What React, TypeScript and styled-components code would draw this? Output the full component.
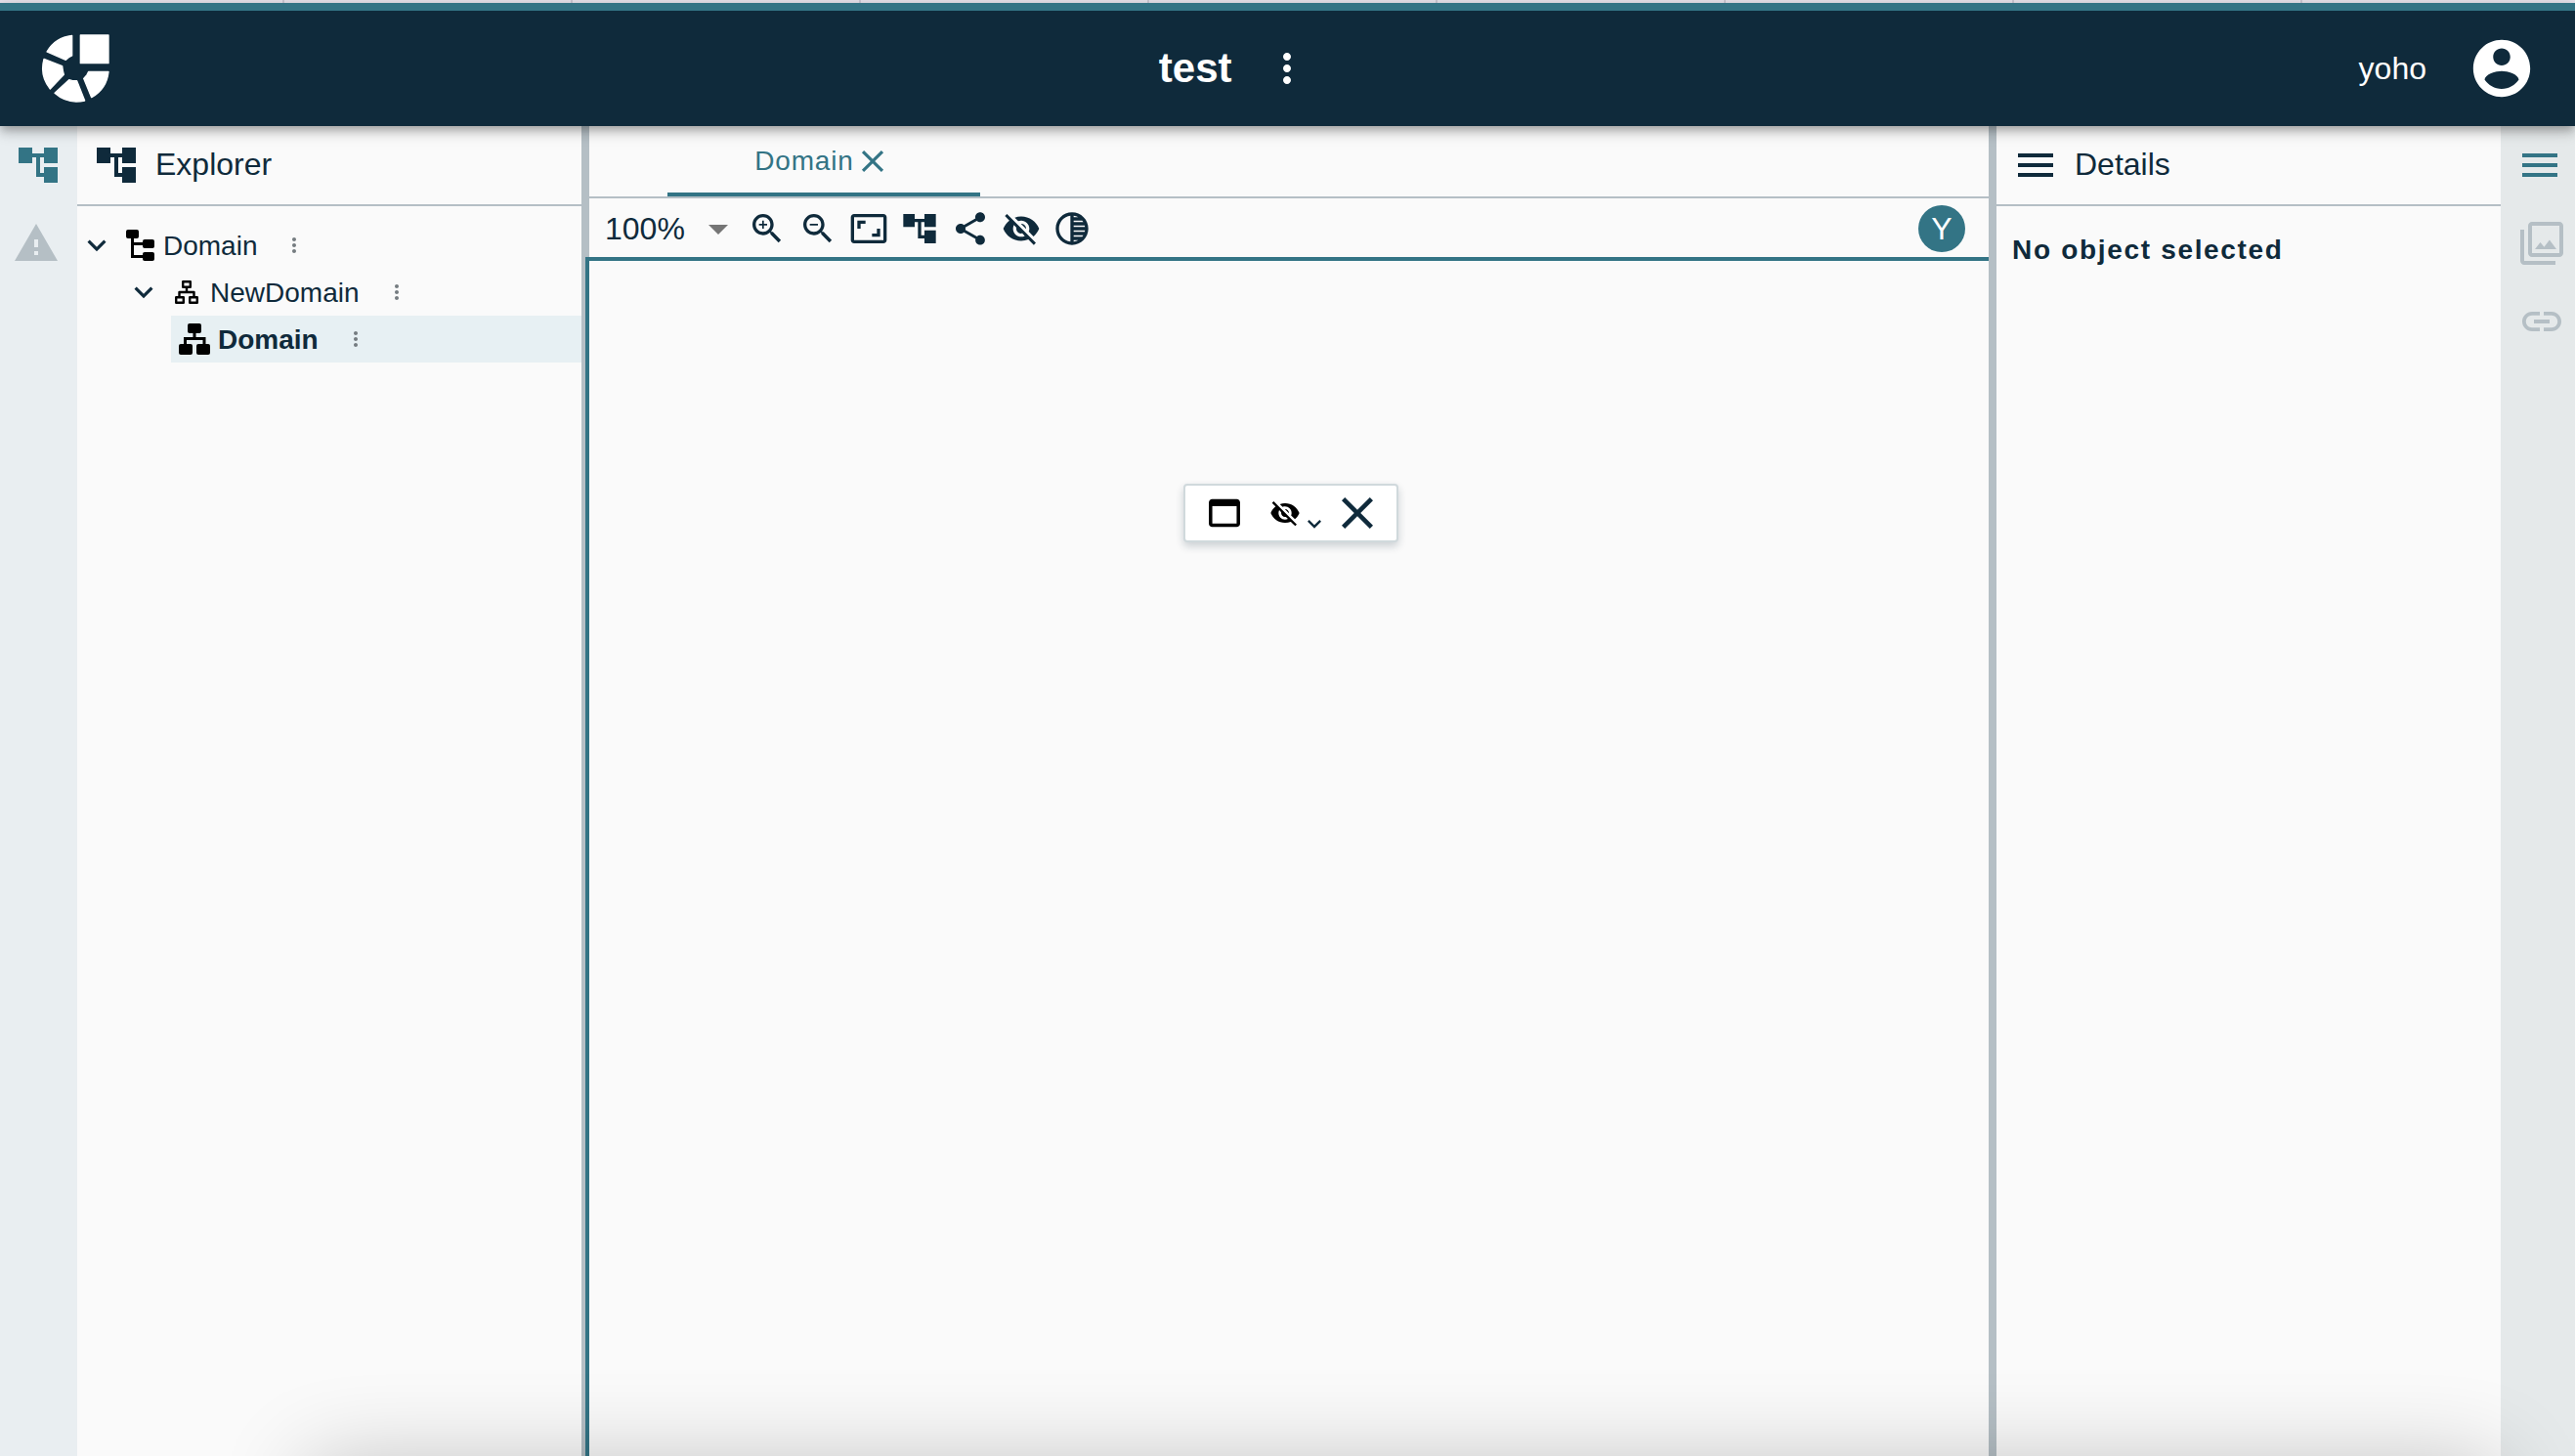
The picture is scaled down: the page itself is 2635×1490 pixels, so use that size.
import React from "react";
import styled, { createGlobalStyle } from "styled-components";

const color = {
  navy: "#0f2a3b",
  teal: "#337485",
  paper: "#fafafa",
  line: "#b5bfc5",
  muted: "#b5bfc5",
};

const GlobalStyle = createGlobalStyle`
  *, *::before, *::after { box-sizing: border-box; }
  body {
    margin: 0;
    background: ${color.paper};
    color: ${color.navy};
    font-family: "Liberation Sans", Arial, Helvetica, sans-serif;
    font-size: 28px;
    line-height: 32px;
  }
  button, select { font: inherit; color: inherit; }
  h1, h2, p, ul { margin: 0; padding: 0; }
`;

const Page = styled.div`
  position: relative;
  display: flex;
  flex-direction: column;
  height: 100vh;
  overflow: hidden;
`;

const WindowEdge = styled.div`
  flex: none;
  height: 3px;
  background: repeating-linear-gradient(90deg, #e6e2eb 0 293px, #cbc7d2 293px 295px) -4px 0;
`;

const Header = styled.header`
  position: relative;
  z-index: 2;
  flex: none;
  display: grid;
  grid-template-columns: 1fr 48px 1fr;
  align-items: center;
  column-gap: 32px;
  height: 126px;
  padding: 0 40px 0 38px;
  border-top: 8px solid ${color.teal};
  background: ${color.navy};
  color: #fff;
  box-shadow: 0 4px 8px -2px rgba(0, 0, 0, 0.2), 0 8px 10px rgba(0, 0, 0, 0.14),
    0 2px 20px rgba(0, 0, 0, 0.12);
`;

const Brand = styled.div`
  display: flex;
  align-items: center;
  justify-content: space-between;
  padding-left: 4px;
`;

const ProjectName = styled.h1`
  font-size: 42px;
  line-height: 48px;
  font-weight: 700;
`;

const Account = styled.div`
  display: flex;
  align-items: center;
  justify-content: flex-end;
  gap: 42px;
  font-size: 32px;
`;

const IconButton = styled.button<{ $box: number; $color?: string }>`
  flex: none;
  display: flex;
  align-items: center;
  justify-content: center;
  width: ${(p) => p.$box}px;
  height: ${(p) => p.$box}px;
  padding: 0;
  border: 0;
  background: none;
  color: ${(p) => p.$color ?? "inherit"};
  cursor: pointer;
`;

const Svg = styled.svg`
  flex: none;
  display: block;
  fill: currentColor;
`;

const Workbench = styled.div`
  flex: 1;
  min-height: 0;
  display: grid;
  grid-template-columns: 79px 516px 8px minmax(0, 1fr) 8px 516px 76px;
`;

const Rail = styled.nav<{ $side: "left" | "right" }>`
  display: flex;
  flex-direction: column;
  align-items: center;
  gap: 32px;
  padding: ${(p) => (p.$side === "right" ? "16px 0 0 4px" : "16px 1px 0 0")};
  background: ${(p) => (p.$side === "left" ? "#e9eef1" : "#e5e9ea")};
`;

const RailButton = styled.button<{ $side: "left" | "right" }>`
  display: flex;
  justify-content: center;
  width: 100%;
  padding: 0;
  border: 0 solid transparent;
  background: none;
  color: ${color.teal};
  cursor: pointer;

  &[aria-pressed="false"] {
    color: ${color.muted};
    border-${(p) => (p.$side === "left" ? "right" : "left")}-width: 4px;
  }
`;

const Panel = styled.section`
  min-width: 0;
  display: flex;
  flex-direction: column;
`;

const PanelHeader = styled.div`
  flex: none;
  display: flex;
  align-items: center;
  gap: 16px;
  height: 82px;
  padding: 0 16px;
  border-bottom: 2px solid ${color.line};
`;

const PanelTitle = styled.h2`
  padding-bottom: 2px;
  font-size: 32px;
  line-height: 40px;
  font-weight: 400;
`;

const Splitter = styled.div`
  background: ${color.line};
`;

const Tree = styled.ul`
  padding-top: 16px;
  list-style: none;
`;

const Branch = styled.ul`
  list-style: none;
`;

const Row = styled.div<{ $depth: number }>`
  display: flex;
  align-items: center;
  height: 48px;
  padding-left: ${(p) => p.$depth * 48}px;
`;

const RowContent = styled.div<{ $selected?: boolean }>`
  flex: 1;
  display: flex;
  align-items: center;
  gap: 8px;
  height: 100%;
  padding-left: 8px;
  background: ${(p) => (p.$selected ? "#e7f0f3" : "transparent")};
  font-weight: ${(p) => (p.$selected ? 700 : 400)};
`;

const ItemIcon = styled.span`
  display: flex;
  justify-content: center;
  width: 32px;
  color: #000;
`;

const ItemLabel = styled.span`
  padding: 2px 18px 0 0;
`;

const Message = styled.p`
  padding: 29px 16px;
  font-weight: 700;
  letter-spacing: 0.06em;
`;

const TabBar = styled.div`
  flex: none;
  height: 74px;
  padding-left: 80px;
  border-bottom: 2px solid ${color.line};
`;

const Tab = styled.div`
  display: flex;
  align-items: center;
  justify-content: center;
  width: 320px;
  height: 72px;
  padding: 4px 2px 0 0;
  border-bottom: 4px solid ${color.teal};
  color: ${color.teal};
`;

const TabLabel = styled.button`
  padding: 0;
  border: 0;
  background: none;
  letter-spacing: 0.03em;
  cursor: pointer;
`;

const Toolbar = styled.div`
  flex: none;
  display: flex;
  align-items: center;
  gap: 12px;
  height: 60px;
  padding: 2px 24px 0 16px;
`;

const ZoomField = styled.label`
  position: relative;
  display: flex;
  align-items: center;
  width: 134px;
  font-size: 32px;
`;

const ZoomSelect = styled.select`
  width: 100%;
  height: 40px;
  padding: 0;
  border: 0;
  background: none;
  appearance: none;
`;

const SelectArrow = styled.span`
  position: absolute;
  right: -6px;
  color: #757575;
  pointer-events: none;
`;

const UserBadge = styled.span`
  display: flex;
  align-items: center;
  justify-content: center;
  width: 48px;
  height: 48px;
  margin-left: auto;
  border-radius: 50%;
  background: ${color.teal};
  color: #fff;
  font-size: 32px;
`;

const Canvas = styled.div`
  position: relative;
  flex: 1;
  margin-left: -4px;
  border: solid ${color.teal};
  border-width: 4px 0 0 4px;
`;

const Palette = styled.div`
  position: absolute;
  top: 228px;
  left: 608px;
  display: flex;
  align-items: center;
  height: 60px;
  padding: 0 24px;
  border: 2px solid #d0d9dc;
  border-radius: 4px;
  background: #fff;
  box-shadow: 0 4px 8px rgba(15, 42, 59, 0.2);
`;

const PaletteGroup = styled.div`
  display: flex;
  align-items: center;
  margin: 0 14px 0 30px;
`;

const PaletteMore = styled.span`
  display: flex;
  padding-top: 22px;
`;

const DockShadow = styled.div`
  position: absolute;
  z-index: 3;
  top: 100%;
  left: 12%;
  right: 3%;
  height: 200px;
  margin-top: 8px;
  box-shadow: 0 0 92px rgba(0, 0, 0, 0.24);
  pointer-events: none;
`;

const paths = {
  tree: "M22 11V3h-7v3H9V3H2v8h7V8h2v10h4v3h7v-8h-7v3h-2V8h2v3z",
  warning: "M1 21h22L12 2 1 21zm12-3h-2v-2h2v2zm0-4h-2v-4h2v4z",
  menu: "M3 18h18v-2H3v2zm0-5h18v-2H3v2zm0-7v2h18V6H3z",
  filter:
    "M15.96 10.29l-2.75 3.54-1.96-2.36L8.5 15h11l-3.54-4.71zM3 5H1v16c0 1.1.9 2 2 2h16v-2H3V5zm18-4H7c-1.1 0-2 .9-2 2v14c0 1.1.9 2 2 2h14c1.1 0 2-.9 2-2V3c0-1.1-.9-2-2-2zm0 16H7V3h14v14z",
  link: "M3.9 12c0-1.71 1.39-3.1 3.1-3.1h4V7H7c-2.76 0-5 2.24-5 5s2.24 5 5 5h4v-1.9H7c-1.71 0-3.1-1.39-3.1-3.1zM8 13h8v-2H8v2zm9-6h-4v1.9h4c1.71 0 3.1 1.39 3.1 3.1s-1.39 3.1-3.1 3.1h-4V17h4c2.76 0 5-2.24 5-5s-2.24-5-5-5z",
  dots: "M12 8c1.1 0 2-.9 2-2s-.9-2-2-2-2 .9-2 2 .9 2 2 2zm0 2c-1.1 0-2 .9-2 2s.9 2 2 2 2-.9 2-2-.9-2-2-2zm0 6c-1.1 0-2 .9-2 2s.9 2 2 2 2-.9 2-2-.9-2-2-2z",
  account:
    "M12 2C6.48 2 2 6.48 2 12s4.48 10 10 10 10-4.48 10-10S17.52 2 12 2zm0 3c1.66 0 3 1.34 3 3s-1.34 3-3 3-3-1.34-3-3 1.34-3 3-3zm0 14.2c-2.5 0-4.71-1.28-6-3.22.03-1.99 4-3.08 6-3.08 1.99 0 5.97 1.09 6 3.08-1.29 1.94-3.5 3.22-6 3.22z",
  chevron: "M16.59 8.59L12 13.17 7.41 8.59 6 10l6 6 6-6z",
  close:
    "M19 6.41L17.59 5 12 10.59 6.41 5 5 6.41 10.59 12 5 17.59 6.41 19 12 13.41 17.59 19 19 17.59 13.41 12z",
  arrow: "M7 10l5 5 5-5z",
  zoomIn:
    "M15.5 14h-.79l-.28-.27C15.41 12.59 16 11.11 16 9.5 16 5.91 13.09 3 9.5 3S3 5.91 3 9.5 5.91 16 9.5 16c1.61 0 3.09-.59 4.23-1.57l.27.28v.79l5 4.99L20.49 19l-4.99-5zm-6 0C7.01 14 5 11.99 5 9.5S7.01 5 9.5 5 14 7.01 14 9.5 11.99 14 9.5 14zm2.5-4h-2v2H9v-2H7V9h2V7h1v2h2v1z",
  zoomOut:
    "M15.5 14h-.79l-.28-.27C15.41 12.59 16 11.11 16 9.5 16 5.91 13.09 3 9.5 3S3 5.91 3 9.5 5.91 16 9.5 16c1.61 0 3.09-.59 4.23-1.57l.27.28v.79l5 4.99L20.49 19l-4.99-5zm-6 0C7.01 14 5 11.99 5 9.5S7.01 5 9.5 5 14 7.01 14 9.5 11.99 14 9.5 14zM7 9h5v1H7z",
  aspect:
    "M19 12h-2v3h-3v2h5v-5zM7 9h3V7H5v5h2V9zm14-6H3c-1.1 0-2 .9-2 2v14c0 1.1.9 2 2 2h18c1.1 0 2-.9 2-2V5c0-1.1-.9-2-2-2zm0 16.01H3V4.99h18v14.02z",
  share:
    "M18 16.08c-.76 0-1.44.3-1.96.77L8.91 12.7c.05-.23.09-.46.09-.7s-.04-.47-.09-.7l7.05-4.11c.54.5 1.25.81 2.04.81 1.66 0 3-1.34 3-3s-1.34-3-3-3-3 1.34-3 3c0 .24.04.47.09.7L8.04 9.81C7.5 9.31 6.79 9 6 9c-1.66 0-3 1.34-3 3s1.34 3 3 3c.79 0 1.5-.31 2.04-.81l7.12 4.16c-.05.21-.08.43-.08.65 0 1.61 1.31 2.92 2.92 2.92 1.61 0 2.92-1.31 2.92-2.92s-1.31-2.92-2.92-2.92z",
  hidden:
    "M12 7c2.76 0 5 2.24 5 5 0 .65-.13 1.26-.36 1.83l2.92 2.92c1.51-1.26 2.7-2.89 3.43-4.75-1.73-4.39-6-7.5-11-7.5-1.4 0-2.74.25-3.98.7l2.16 2.16C10.74 7.13 11.35 7 12 7zM2 4.27l2.28 2.28.46.46C3.08 8.3 1.78 10.02 1 12c1.73 4.39 6 7.5 11 7.5 1.55 0 3.03-.3 4.38-.84l.42.42L19.73 22 21 20.73 3.27 3 2 4.27zM7.53 9.8l1.55 1.55c-.05.21-.08.43-.08.65 0 1.66 1.34 3 3 3 .22 0 .44-.03.65-.08l1.55 1.55c-.67.33-1.41.53-2.2.53-2.76 0-5-2.24-5-5 0-.79.2-1.53.53-2.2zm4.31-.78l3.15 3.15.02-.16c0-1.66-1.34-3-3-3l-.17.01z",
  tonality:
    "M12 2C6.48 2 2 6.48 2 12s4.48 10 10 10 10-4.48 10-10S17.52 2 12 2zm-1 17.93c-3.94-.49-7-3.85-7-7.93s3.05-7.44 7-7.93v15.86zm2-15.86c1.03.13 2 .45 2.87.93H13v-.93zM13 7h5.24c.25.31.48.65.68 1H13V7zm0 3h6.74c.08.33.15.66.19 1H13v-1zm0 9.93V19h2.87c-.87.48-1.84.8-2.87.93zM18.24 17H13v-1h5.92c-.2.35-.43.69-.68 1zm1.5-3H13v-1h6.93c-.04.34-.11.67-.19 1z",
  webAsset: "M19 4H5c-1.11 0-2 .9-2 2v12c0 1.1.89 2 2 2h14c1.1 0 2-.9 2-2V6c0-1.1-.89-2-2-2zm0 14H5V8h14v10z",
};

type IconName = keyof typeof paths;

function Icon({ name, size, crop }: { name: IconName; size: number; crop?: string }) {
  return (
    <Svg width={size} height={size} viewBox={crop ?? "0 0 24 24"} aria-hidden="true">
      <path d={paths[name]} />
    </Svg>
  );
}

function Logo() {
  return (
    <Svg
      width="70"
      height="70"
      viewBox="27 27 210 210"
      stroke="currentColor"
      strokeWidth="4"
      strokeLinejoin="round"
      role="img"
      aria-label="Home"
    >
      <path d="M148 30H234V116H148Z" />
      <path d="M122 31V93L112 98L103 106L45 81A101 101 0 0 1 122 31Z" />
      <path d="M36 103L92 125L94 139L97 151L55 195A103 103 0 0 1 36 103Z" />
      <path d="M113 167L124 170L137 170L161 231A103 103 0 0 1 69 208Z" />
      <path d="M173 142H234A103 103 0 0 1 182 221L158 163L168 152Z" />
    </Svg>
  );
}

function ModelIcon() {
  return (
    <Svg width="29" height="32" viewBox="0 0 29 32" aria-hidden="true">
      <rect width="13" height="9" rx="2" />
      <rect x="17" y="10" width="12" height="9" rx="2" />
      <rect x="17" y="23" width="12" height="9" rx="2" />
      <path d="M5 8H8V13H18V16H8V26H18V29H5Z" />
    </Svg>
  );
}

function PackageIcon() {
  return (
    <Svg width="24" height="24" viewBox="0 0 24 24" aria-hidden="true">
      <g fill="none" stroke="currentColor" strokeWidth="2.4" strokeLinejoin="round">
        <rect x="8.2" y="1.2" width="7.6" height="5.6" />
        <rect x="1.2" y="17.2" width="7.6" height="5.6" />
        <rect x="15.2" y="17.2" width="7.6" height="5.6" />
        <path d="M12 7V12M4.5 17V12H19.5V17" />
      </g>
    </Svg>
  );
}

function DiagramIcon() {
  return (
    <Svg width="32" height="32" viewBox="0 0 32 32" aria-hidden="true">
      <rect x="9" width="14" height="10" rx="2" />
      <rect y="21" width="14" height="11" rx="2" />
      <rect x="18" y="21" width="14" height="11" rx="2" />
      <path d="M14.5 9H17.5V14H27.5V22H24.5V17H8V22H5V14H14.5Z" />
    </Svg>
  );
}

interface TreeRowProps {
  depth: number;
  label: string;
  icon: React.ReactNode;
  leaf?: boolean;
  selected?: boolean;
}

function TreeRow({ depth, label, icon, leaf, selected }: TreeRowProps) {
  return (
    <Row $depth={depth}>
      {!leaf && (
        <IconButton $box={40} aria-label={`Collapse ${label}`}>
          <Icon name="chevron" size={38} />
        </IconButton>
      )}
      <RowContent $selected={selected}>
        <ItemIcon>{icon}</ItemIcon>
        <ItemLabel>{label}</ItemLabel>
        <IconButton $box={24} $color="#757c80" aria-label={`More actions for ${label}`}>
          <Icon name="dots" size={24} />
        </IconButton>
      </RowContent>
    </Row>
  );
}

const tools: { name: IconName; label: string }[] = [
  { name: "zoomIn", label: "Zoom in" },
  { name: "zoomOut", label: "Zoom out" },
  { name: "aspect", label: "Fit to screen" },
  { name: "tree", label: "Arrange all" },
  { name: "share", label: "Share" },
  { name: "hidden", label: "Hidden elements" },
  { name: "tonality", label: "Faded elements" },
];

function RailItem({
  side,
  name,
  label,
  active = false,
}: {
  side: "left" | "right";
  name: IconName;
  label: string;
  active?: boolean;
}) {
  return (
    <RailButton $side={side} aria-pressed={active} aria-label={label}>
      <Icon name={name} size={48} />
    </RailButton>
  );
}

export default function App() {
  return (
    <Page>
      <GlobalStyle />
      <WindowEdge />
      <Header>
        <Brand>
          <Logo />
          <ProjectName>test</ProjectName>
        </Brand>
        <IconButton $box={48} aria-label="Project actions">
          <Icon name="dots" size={48} />
        </IconButton>
        <Account>
          <span>yoho</span>
          <IconButton $box={70} aria-label="Account">
            <Icon name="account" size={70} />
          </IconButton>
        </Account>
      </Header>

      <Workbench>
        <Rail $side="left" aria-label="Left views">
          <RailItem side="left" name="tree" label="Explorer" active />
          <RailItem side="left" name="warning" label="Validation" />
        </Rail>

        <Panel>
          <PanelHeader>
            <Icon name="tree" size={48} />
            <PanelTitle>Explorer</PanelTitle>
          </PanelHeader>
          <Tree>
            <li>
              <TreeRow depth={0} label="Domain" icon={<ModelIcon />} />
              <Branch>
                <li>
                  <TreeRow depth={1} label="NewDomain" icon={<PackageIcon />} />
                  <Branch>
                    <li>
                      <TreeRow depth={2} label="Domain" icon={<DiagramIcon />} leaf selected />
                    </li>
                  </Branch>
                </li>
              </Branch>
            </li>
          </Tree>
        </Panel>

        <Splitter />

        <Panel>
          <TabBar>
            <Tab>
              <TabLabel>Domain</TabLabel>
              <IconButton $box={38} aria-label="Close Domain">
                <Icon name="close" size={38} />
              </IconButton>
            </Tab>
          </TabBar>
          <Toolbar>
            <ZoomField>
              <ZoomSelect aria-label="Zoom level" defaultValue="100%">
                <option>200%</option>
                <option>100%</option>
                <option>50%</option>
              </ZoomSelect>
              <SelectArrow>
                <Icon name="arrow" size={48} />
              </SelectArrow>
            </ZoomField>
            {tools.map((tool) => (
              <IconButton key={tool.name} $box={40} aria-label={tool.label}>
                <Icon name={tool.name} size={40} />
              </IconButton>
            ))}
            <UserBadge>Y</UserBadge>
          </Toolbar>
          <Canvas>
            <Palette>
              <IconButton $box={32} $color="#000" aria-label="New element">
                <Icon name="webAsset" size={32} crop="3 3 18 18" />
              </IconButton>
              <PaletteGroup>
                <IconButton $box={32} $color="#000" aria-label="Hide">
                  <Icon name="hidden" size={32} />
                </IconButton>
                <PaletteMore>
                  <Icon name="chevron" size={28} />
                </PaletteMore>
              </PaletteGroup>
              <IconButton $box={32} aria-label="Close palette">
                <Icon name="close" size={32} crop="5 5 14 14" />
              </IconButton>
            </Palette>
          </Canvas>
        </Panel>

        <Splitter />

        <Panel>
          <PanelHeader>
            <Icon name="menu" size={48} />
            <PanelTitle>Details</PanelTitle>
          </PanelHeader>
          <Message>No object selected</Message>
        </Panel>

        <Rail $side="right" aria-label="Right views">
          <RailItem side="right" name="menu" label="Details" active />
          <RailItem side="right" name="filter" label="Representations" />
          <RailItem side="right" name="link" label="Related elements" />
        </Rail>
      </Workbench>
      <DockShadow />
    </Page>
  );
}
